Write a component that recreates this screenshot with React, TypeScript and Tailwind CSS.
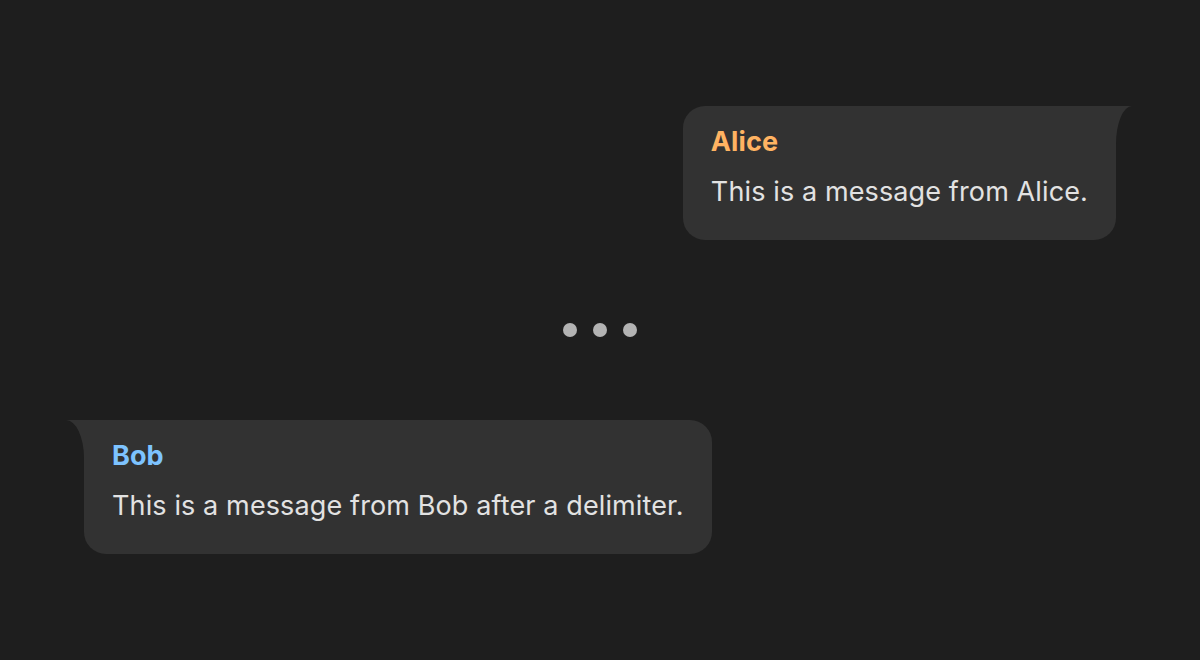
import React from 'react'

interface BubbleProps {
  name: string
  text: string
  side: 'left' | 'right'
  nameColor: string
}

const Bubble: React.FC<BubbleProps> = ({ name, text, side, nameColor }) => {
  const right = side === 'right'
  return (
    <div
      className={`relative bg-[#323232] px-[28px] pt-[20px] pb-[32px] ${
        right
          ? 'self-end rounded-l-[22px] rounded-br-[22px]'
          : 'self-start rounded-r-[22px] rounded-bl-[22px]'
      }`}
    >
      {/* tail */}
      {right ? (
        <svg
          className="absolute top-0 -right-[16px]"
          width="16"
          height="38"
          viewBox="0 0 16 38"
        >
          <path d="M0 0 H16 A16 38 0 0 0 0 38 Z" fill="#323232" />
        </svg>
      ) : (
        <svg
          className="absolute top-0 -left-[18px]"
          width="18"
          height="38"
          viewBox="0 0 18 38"
        >
          <path d="M18 0 H0 A18 38 0 0 1 18 38 Z" fill="#323232" />
        </svg>
      )}
      <p className={`text-[27px] font-bold leading-[32px] tracking-[0.1px] ${nameColor}`}>{name}</p>
      <p className="mt-[18px] text-[27px] leading-[32px] tracking-[0.12px] text-[#e2e2e2]">{text}</p>
    </div>
  )
}

export default function App() {
  return (
    <div
      className="flex h-[660px] w-full flex-col justify-center bg-[#1e1e1e] px-[84px]"
      style={{ fontFamily: 'Inter, "Noto Sans", sans-serif' }}
    >
      <Bubble
        side="right"
        name="Alice"
        nameColor="text-[#ffb362]"
        text="This is a message from Alice."
      />

      {/* delimiter */}
      <div className="my-[83px] flex items-center justify-center gap-[16px]">
        <span className="h-[14px] w-[14px] rounded-full bg-[#b3b3b3]" />
        <span className="h-[14px] w-[14px] rounded-full bg-[#b3b3b3]" />
        <span className="h-[14px] w-[14px] rounded-full bg-[#b3b3b3]" />
      </div>

      <Bubble
        side="left"
        name="Bob"
        nameColor="text-[#7dc3ff]"
        text="This is a message from Bob after a delimiter."
      />
    </div>
  )
}
